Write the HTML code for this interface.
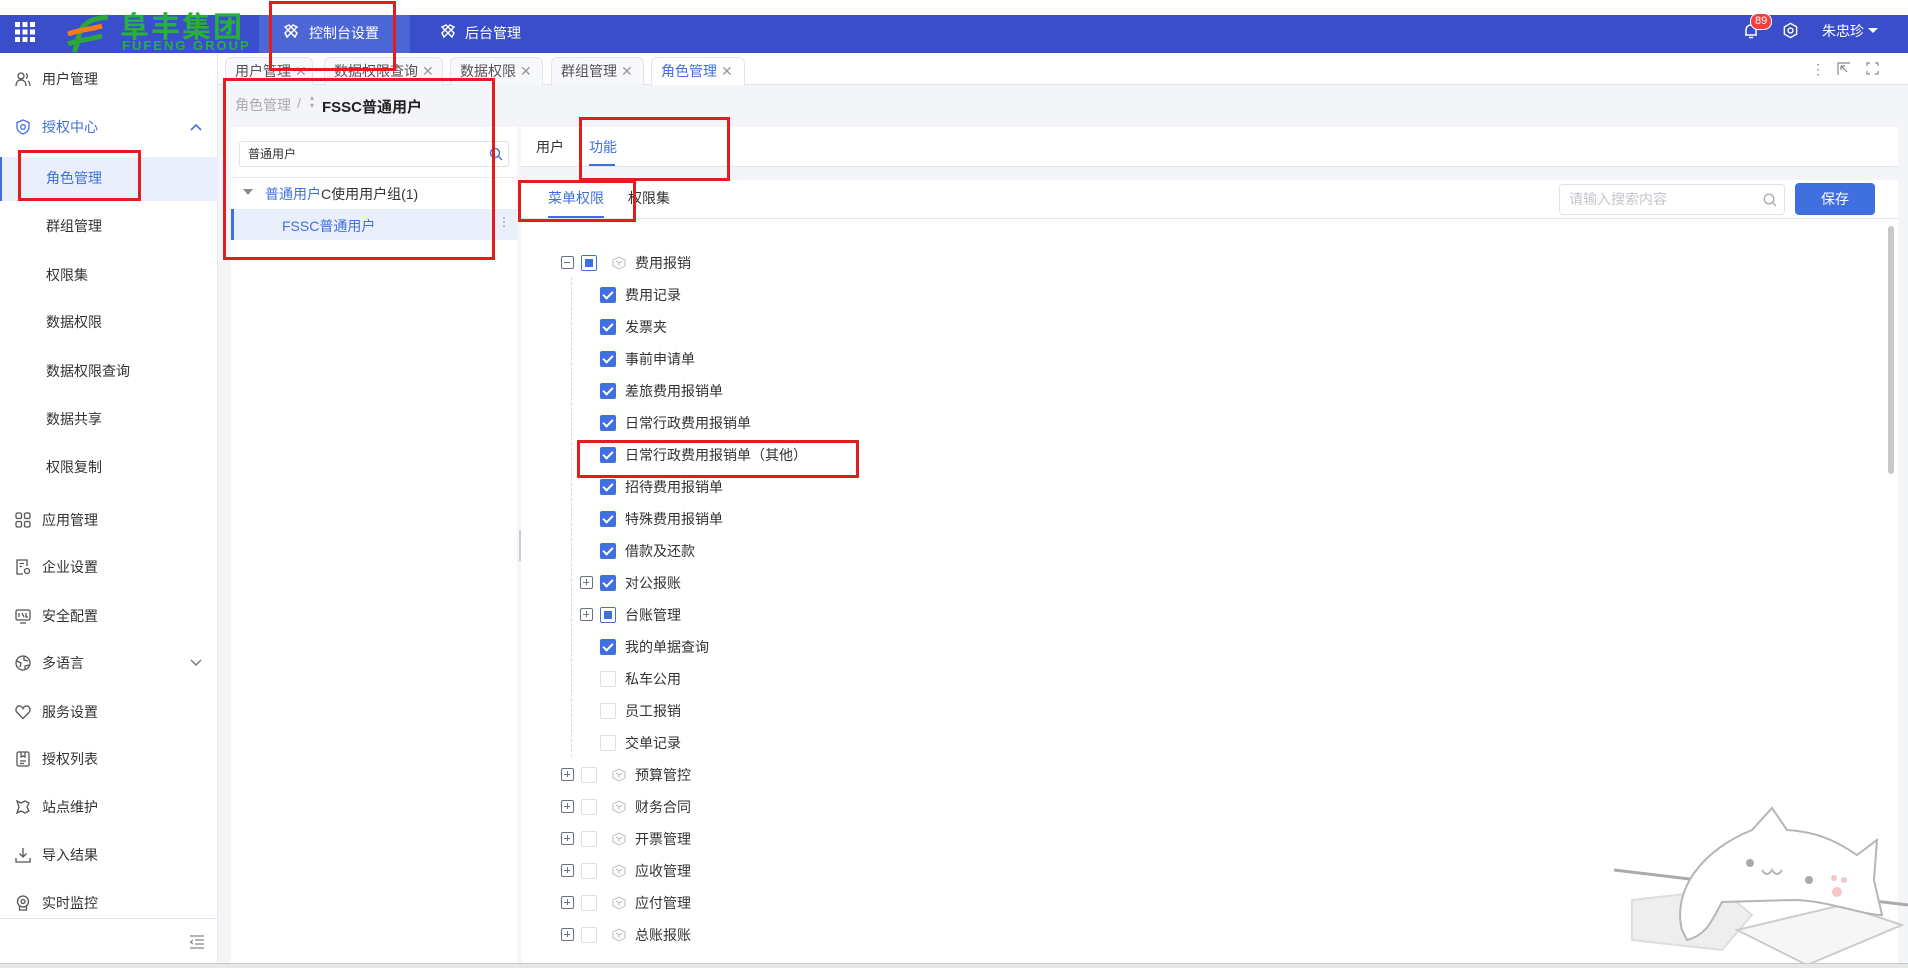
<!DOCTYPE html>
<html><head><meta charset="utf-8">
<style>
*{box-sizing:border-box;margin:0;padding:0}
body{width:1908px;height:968px;overflow:hidden;background:#fff;font-family:"Liberation Sans","Noto Sans CJK SC",sans-serif;font-size:14px;color:#333;position:relative}
.abs{position:absolute}
.top{left:0;top:15px;width:1908px;height:38px;background:#3a4ecb}
.side{left:0;top:53px;width:218px;height:910px;background:#fff;border-right:1px solid #e8e8ee}
.si{position:absolute;left:0;width:218px;height:24px;line-height:24px;font-size:14px;color:#333}
.si .ic{position:absolute;left:15px;top:4px;width:16px;height:16px}
.si span{position:absolute;left:42px}
.sub span{left:46px}
.content{left:218px;top:85px;width:1690px;height:878px;background:#f4f5f9}
.tab{position:absolute;top:57px;height:28px;border:1px solid #e3e5ec;border-bottom:none;border-radius:6px 6px 0 0;background:#f7f8fb;font-size:14px;line-height:27px;padding-left:9px;color:#555}
.tab b{font-weight:normal;color:#999;margin-left:4px}
.red{position:absolute;border:3px solid #e21d1d}
.row{position:absolute;height:20px;line-height:20px;font-size:14px;color:#333}
.cb{position:absolute;width:16px;height:16px;border-radius:2px}
.on{background:#4070e0}
.on:after{content:"";position:absolute;left:5px;top:2px;width:4px;height:8px;border:solid #fff;border-width:0 2px 2px 0;transform:rotate(45deg)}
.off{border:1px solid #dcdfe6;background:#fff}
.half{border:1px solid #4070e0;background:#fff}
.half:after{content:"";position:absolute;left:3px;top:3px;width:8px;height:8px;background:#4070e0}
.ex{position:absolute;width:13px;height:13px;border:1.5px solid #6b7285;border-radius:2px}
.ex:before{content:"";position:absolute;left:2px;top:4.5px;width:6px;height:1.5px;background:#6b7285}
.plus:after{content:"";position:absolute;left:4.5px;top:2px;width:1.5px;height:6px;background:#6b7285}
.cube{position:absolute;width:14px;height:14px}
</style></head><body>
<div class="abs top"></div>
<svg class="abs" style="left:15px;top:22px" width="20" height="20" viewBox="0 0 20 20" fill="#fff"><g><rect x="0" y="0" width="5" height="5"/><rect x="7.5" y="0" width="5" height="5"/><rect x="15" y="0" width="5" height="5"/><rect x="0" y="7.5" width="5" height="5"/><rect x="7.5" y="7.5" width="5" height="5"/><rect x="15" y="7.5" width="5" height="5"/><rect x="0" y="15" width="5" height="5"/><rect x="7.5" y="15" width="5" height="5"/><rect x="15" y="15" width="5" height="5"/></g></svg>
<svg class="abs" style="left:64px;top:14px" width="48" height="40" viewBox="0 0 48 40"><path d="M10 38 C16 28 12 18 22 10 C26 6 34 4 44 3" stroke="#2aa83a" stroke-width="5" fill="none"/><path d="M4 20 C14 16 24 16 38 12" stroke="#f07d1a" stroke-width="5" fill="none"/><path d="M4 30 C14 26 24 26 38 22" stroke="#2aa83a" stroke-width="5" fill="none"/></svg>
<div class="abs" style="left:120px;top:13px;color:#27b03a;font-size:29px;font-weight:bold;letter-spacing:2px;line-height:30px">阜丰集团</div>
<div class="abs" style="left:122px;top:40px;color:#27b03a;font-size:13px;font-weight:bold;letter-spacing:2px;line-height:12px">FUFENG GROUP</div>
<div class="abs" style="left:259px;top:15px;width:151px;height:38px;background:#4d66d6"></div>
<svg class="abs" style="left:283px;top:23px" width="16" height="16" viewBox="0 0 16 16" fill="none" stroke="#fff" stroke-width="1.5"><path d="M2 4 L6 2 L14 10 L12 14 Z"/><path d="M14 4 L10 2 L2 10 L4 14 Z"/></svg>
<div class="abs" style="left:309px;top:23px;color:#fff;font-size:14px">控制台设置</div>
<svg class="abs" style="left:440px;top:23px" width="16" height="16" viewBox="0 0 16 16" fill="none" stroke="#fff" stroke-width="1.5"><path d="M2 4 L6 2 L14 10 L12 14 Z"/><path d="M14 4 L10 2 L2 10 L4 14 Z"/></svg>
<div class="abs" style="left:465px;top:23px;color:#fff;font-size:14px">后台管理</div>
<svg class="abs" style="left:1742px;top:22px" width="18" height="18" viewBox="0 0 18 18" fill="none" stroke="#fff" stroke-width="1.5"><path d="M4 13 V8 a5 5 0 0 1 10 0 V13 H3 H15"/><path d="M7 15.5 H11"/></svg>
<div class="abs" style="left:1750px;top:13px;background:#f04040;color:#fff;font-size:11px;border-radius:8px;padding:0 4px;line-height:15px;border:1px solid #fff">89</div>
<svg class="abs" style="left:1782px;top:22px" width="17" height="17" viewBox="0 0 18 18" fill="none" stroke="#fff" stroke-width="1.5"><path d="M9 1.5 L15.5 5.2 V12.8 L9 16.5 L2.5 12.8 V5.2 Z"/><circle cx="9" cy="9" r="2.6"/></svg>
<div class="abs" style="left:1822px;top:21px;color:#fff;font-size:14px">朱忠珍</div>
<div class="abs" style="left:1868px;top:28px;border:5px solid transparent;border-top:5px solid #fff"></div>

<div class="abs side"></div>
<div class="abs" style="left:0;top:157px;width:218px;height:44px;background:#e9effb"></div>
<div class="abs" style="left:0;top:157px;width:2px;height:44px;background:#4070e0"></div>
<div class="si" style="top:67px"><svg class="ic" viewBox="0 0 16 16" fill="none" stroke="#555" stroke-width="1.3"><circle cx="6" cy="5" r="3"/><path d="M1 15 c0-4 2-6 5-6 s5 2 5 6"/><path d="M11 2.5 a3 3 0 0 1 0 5 M13 10 c1.5 1 2 3 2 5"/></svg><span>用户管理</span></div>
<div class="si" style="top:115px;color:#4070e0"><svg class="ic" viewBox="0 0 16 16" fill="none" stroke="#4070e0" stroke-width="1.3"><path d="M8 1 L14 3.5 V8 c0 3.5-3 6-6 7 c-3-1-6-3.5-6-7 V3.5 Z"/><circle cx="8" cy="8" r="2.3"/></svg><span>授权中心</span><svg style="position:absolute;left:190px;top:8px" width="12" height="8" viewBox="0 0 12 8" fill="none" stroke="#4070e0" stroke-width="1.6"><path d="M1 7 L6 2 L11 7"/></svg></div>
<div class="si sub" style="top:166px;color:#4070e0"><span>角色管理</span></div>
<div class="si sub" style="top:214px"><span>群组管理</span></div>
<div class="si sub" style="top:263px"><span>权限集</span></div>
<div class="si sub" style="top:310px"><span>数据权限</span></div>
<div class="si sub" style="top:359px"><span>数据权限查询</span></div>
<div class="si sub" style="top:407px"><span>数据共享</span></div>
<div class="si sub" style="top:455px"><span>权限复制</span></div>
<div class="si" style="top:508px"><svg class="ic" viewBox="0 0 16 16" fill="none" stroke="#555" stroke-width="1.3"><rect x="1" y="1" width="5.5" height="5.5" rx="1.5"/><rect x="9.5" y="1" width="5.5" height="5.5" rx="1.5"/><rect x="1" y="9.5" width="5.5" height="5.5" rx="1.5"/><rect x="9.5" y="9.5" width="5.5" height="5.5" rx="1.5"/></svg><span>应用管理</span></div>
<div class="si" style="top:555px"><svg class="ic" viewBox="0 0 16 16" fill="none" stroke="#555" stroke-width="1.3"><path d="M8 15 H2 V1 H12 V7"/><path d="M4.5 4.5 H9 M4.5 7.5 H7"/><circle cx="12" cy="12" r="2.5"/></svg><span>企业设置</span></div>
<div class="si" style="top:604px"><svg class="ic" viewBox="0 0 16 16" fill="none" stroke="#555" stroke-width="1.3"><rect x="1" y="2" width="14" height="10" rx="1.5"/><path d="M5 15 H11 M4 5 V9 M7 5 L9 9 M11 5 V9 L13 9"/></svg><span>安全配置</span></div>
<div class="si" style="top:651px"><svg class="ic" viewBox="0 0 16 16" fill="none" stroke="#555" stroke-width="1.3"><circle cx="8" cy="8" r="7"/><path d="M2 6 L6 8 L5 12 M9 1.5 L9 5 L13 6 M10 15 L10 11 L14 10"/></svg><span>多语言</span><svg style="position:absolute;left:190px;top:8px" width="12" height="8" viewBox="0 0 12 8" fill="none" stroke="#777" stroke-width="1.4"><path d="M1 1 L6 6 L11 1"/></svg></div>
<div class="si" style="top:700px"><svg class="ic" viewBox="0 0 16 16" fill="none" stroke="#555" stroke-width="1.3"><path d="M8 14.5 L2 8.5 C-0.5 5.5 2 1.5 5 2 C6.5 2.2 7.5 3.5 8 4.5 C8.5 3.5 9.5 2.2 11 2 C14 1.5 16.5 5.5 14 8.5 Z"/></svg><span>服务设置</span></div>
<div class="si" style="top:747px"><svg class="ic" viewBox="0 0 16 16" fill="none" stroke="#555" stroke-width="1.3"><rect x="2" y="1" width="12" height="14" rx="1.5"/><path d="M6 1 V6 L8 5 L10 6 V1 M5 10 H11 M5 12.5 H9"/></svg><span>授权列表</span></div>
<div class="si" style="top:795px"><svg class="ic" viewBox="0 0 16 16" fill="none" stroke="#555" stroke-width="1.3"><path d="M2 2 L6 4 L10 2 L14 4 L12 8 L14 12 L10 14 L6 12 L2 14 L4 8 Z"/></svg><span>站点维护</span></div>
<div class="si" style="top:843px"><svg class="ic" viewBox="0 0 16 16" fill="none" stroke="#555" stroke-width="1.3"><path d="M8 1 V10 M4.5 6.5 L8 10 L11.5 6.5 M1 11 V15 H15 V11"/></svg><span>导入结果</span></div>
<div class="si" style="top:891px"><svg class="ic" viewBox="0 0 16 16" fill="none" stroke="#555" stroke-width="1.3"><circle cx="8" cy="6.5" r="5.5"/><circle cx="8" cy="6.5" r="2"/><path d="M4.5 11.5 V15 H11.5 V11.5"/></svg><span>实时监控</span></div>
<div class="abs" style="left:0;top:918px;width:218px;height:1px;background:#e6e7ec"></div>
<svg class="abs" style="left:189px;top:935px" width="16" height="14" viewBox="0 0 16 14" fill="none" stroke="#888" stroke-width="1.2"><path d="M1 1 H15 M6 5 H15 M6 9 H15 M1 13 H15 M4 5 L1.5 7 L4 9"/></svg>

<div class="abs" style="left:218px;top:84px;width:1690px;height:1px;background:#e3e5ec"></div>
<div class="tab" style="left:225px;width:88px">用户管理<b>✕</b></div>
<div class="tab" style="left:324px;width:119px">数据权限查询<b>✕</b></div>
<div class="tab" style="left:450px;width:93px">数据权限<b>✕</b></div>
<div class="tab" style="left:551px;width:93px">群组管理<b>✕</b></div>
<div class="tab" style="left:651px;width:94px;background:#fff;color:#4070e0;height:29px">角色管理<b>✕</b></div>
<div class="abs" style="left:1811px;top:62px;color:#888;font-size:14px;line-height:14px">⋮</div>
<svg class="abs" style="left:1837px;top:62px" width="13" height="13" viewBox="0 0 13 13" fill="none" stroke="#888" stroke-width="1.2"><path d="M1 13 V1 H13 M4 4 L10 10 M4 4 H8 M4 4 V8"/></svg>
<svg class="abs" style="left:1866px;top:62px" width="13" height="13" viewBox="0 0 13 13" fill="none" stroke="#888" stroke-width="1.2"><path d="M1 4 V1 H4 M9 1 H12 V4 M12 9 V12 H9 M4 12 H1 V9"/></svg>

<div class="abs content"></div>
<div class="abs" style="left:235px;top:95px;color:#aaa;font-size:14px">角色管理</div>
<div class="abs" style="left:297px;top:95px;color:#aaa;font-size:14px">/</div>
<div class="abs" style="left:310px;top:94px;color:#aaa;font-size:8px;line-height:8px">▴<br>▾</div>
<div class="abs" style="left:322px;top:96px;color:#222;font-size:15px;font-weight:bold">FSSC普通用户</div>

<div class="abs" style="left:231px;top:127px;width:286px;height:836px;background:#fff"></div>
<div class="abs" style="left:239px;top:141px;width:270px;height:26px;border:1px solid #dfe2ea;border-radius:3px;font-size:12px;line-height:24px;padding-left:8px;color:#333">普通用户</div>
<svg class="abs" style="left:489px;top:147px" width="14" height="14" viewBox="0 0 14 14" fill="none" stroke="#4070e0" stroke-width="1.4"><circle cx="6" cy="6" r="4.5"/><path d="M9.5 9.5 L13 13"/></svg>
<div class="abs" style="left:231px;top:177px;width:286px;height:1px;background:#e8e9ee"></div>
<div class="abs" style="left:243px;top:189px;border:5px solid transparent;border-top:6px solid #888"></div>
<div class="abs" style="left:265px;top:184px;font-size:14px;color:#333"><span style="color:#4070e0">普通用户</span>C使用用户组(1)</div>
<div class="abs" style="left:231px;top:209px;width:286px;height:31px;background:#e9effb"></div>
<div class="abs" style="left:231px;top:209px;width:3px;height:31px;background:#4070e0"></div>
<div class="abs" style="left:282px;top:216px;font-size:14px;color:#4070e0">FSSC普通用户</div>
<div class="abs" style="left:498px;top:215px;font-size:12px;color:#888">⋮</div>
<div class="abs" style="left:519px;top:530px;width:12px;height:31px;background:#c9ccd6;border-radius:0 5px 5px 0"></div>
<div class="abs" style="left:522px;top:538px;color:#fff;font-size:11px">‹</div>

<div class="abs" style="left:521px;top:127px;width:1377px;height:40px;background:#fff;border-bottom:1px solid #e3e5ec"></div>
<div class="abs" style="left:536px;top:137px;font-size:14px;color:#333">用户</div>
<div class="abs" style="left:589px;top:137px;font-size:14px;color:#4070e0">功能</div>
<div class="abs" style="left:589px;top:164px;width:26px;height:2px;background:#4070e0"></div>
<div class="abs" style="left:521px;top:180px;width:1377px;height:783px;background:#fff"></div>
<div class="abs" style="left:548px;top:188px;font-size:14px;color:#4070e0">菜单权限</div>
<div class="abs" style="left:628px;top:188px;font-size:14px;color:#333">权限集</div>
<div class="abs" style="left:548px;top:216px;width:56px;height:2px;background:#4070e0"></div>
<div class="abs" style="left:521px;top:218px;width:1377px;height:1px;background:#e3e5ec"></div>
<div class="abs" style="left:1559px;top:184px;width:226px;height:31px;border:1px solid #dfe2ea;border-radius:4px;font-size:14px;line-height:29px;padding-left:9px;color:#c4c6cc">请输入搜索内容</div>
<svg class="abs" style="left:1763px;top:193px" width="14" height="14" viewBox="0 0 14 14" fill="none" stroke="#aaa" stroke-width="1.3"><circle cx="6" cy="6" r="4.8"/><path d="M9.5 9.5 L13 13"/></svg>
<div class="abs" style="left:1795px;top:183px;width:80px;height:32px;background:#4070e0;border-radius:4px;color:#fff;font-size:14px;text-align:center;line-height:32px">保存</div>
<div class="abs" style="left:1888px;top:226px;width:6px;height:248px;background:#c8c8c8;border-radius:3px"></div>

<div class="abs" style="left:571px;top:277px;width:0;height:480px;border-left:1px dashed #d6d8de"></div>
<div class="ex" style="left:561px;top:256px"></div>
<div class="cb half" style="left:581px;top:255px"></div>
<svg class="cube" style="left:612px;top:256px" viewBox="0 0 14 14" fill="none" stroke="#c4c6cc" stroke-width="1.2"><path d="M7 1 L13 4 V10 L7 13 L1 10 V4 Z M4 5 L7 7 L10 5 M7 7 V10"/></svg>
<div class="row" style="left:635px;top:253px">费用报销</div>

<div class="cb on" style="left:600px;top:287px"></div><div class="row" style="left:625px;top:285px">费用记录</div>
<div class="cb on" style="left:600px;top:319px"></div><div class="row" style="left:625px;top:317px">发票夹</div>
<div class="cb on" style="left:600px;top:351px"></div><div class="row" style="left:625px;top:349px">事前申请单</div>
<div class="cb on" style="left:600px;top:383px"></div><div class="row" style="left:625px;top:381px">差旅费用报销单</div>
<div class="cb on" style="left:600px;top:415px"></div><div class="row" style="left:625px;top:413px">日常行政费用报销单</div>
<div class="cb on" style="left:600px;top:447px"></div><div class="row" style="left:625px;top:445px">日常行政费用报销单（其他）</div>
<div class="cb on" style="left:600px;top:479px"></div><div class="row" style="left:625px;top:477px">招待费用报销单</div>
<div class="cb on" style="left:600px;top:511px"></div><div class="row" style="left:625px;top:509px">特殊费用报销单</div>
<div class="cb on" style="left:600px;top:543px"></div><div class="row" style="left:625px;top:541px">借款及还款</div>
<div class="ex plus" style="left:580px;top:576px"></div><div class="cb on" style="left:600px;top:575px"></div><div class="row" style="left:625px;top:573px">对公报账</div>
<div class="ex plus" style="left:580px;top:608px"></div><div class="cb half" style="left:600px;top:607px"></div><div class="row" style="left:625px;top:605px">台账管理</div>
<div class="cb on" style="left:600px;top:639px"></div><div class="row" style="left:625px;top:637px">我的单据查询</div>
<div class="cb off" style="left:600px;top:671px"></div><div class="row" style="left:625px;top:669px">私车公用</div>
<div class="cb off" style="left:600px;top:703px"></div><div class="row" style="left:625px;top:701px">员工报销</div>
<div class="cb off" style="left:600px;top:735px"></div><div class="row" style="left:625px;top:733px">交单记录</div>

<div class="ex plus" style="left:561px;top:768px"></div><div class="cb off" style="left:581px;top:767px"></div><svg class="cube" style="left:612px;top:768px" viewBox="0 0 14 14" fill="none" stroke="#c4c6cc" stroke-width="1.2"><path d="M7 1 L13 4 V10 L7 13 L1 10 V4 Z M4 5 L7 7 L10 5 M7 7 V10"/></svg><div class="row" style="left:635px;top:765px">预算管控</div>
<div class="ex plus" style="left:561px;top:800px"></div><div class="cb off" style="left:581px;top:799px"></div><svg class="cube" style="left:612px;top:800px" viewBox="0 0 14 14" fill="none" stroke="#c4c6cc" stroke-width="1.2"><path d="M7 1 L13 4 V10 L7 13 L1 10 V4 Z M4 5 L7 7 L10 5 M7 7 V10"/></svg><div class="row" style="left:635px;top:797px">财务合同</div>
<div class="ex plus" style="left:561px;top:832px"></div><div class="cb off" style="left:581px;top:831px"></div><svg class="cube" style="left:612px;top:832px" viewBox="0 0 14 14" fill="none" stroke="#c4c6cc" stroke-width="1.2"><path d="M7 1 L13 4 V10 L7 13 L1 10 V4 Z M4 5 L7 7 L10 5 M7 7 V10"/></svg><div class="row" style="left:635px;top:829px">开票管理</div>
<div class="ex plus" style="left:561px;top:864px"></div><div class="cb off" style="left:581px;top:863px"></div><svg class="cube" style="left:612px;top:864px" viewBox="0 0 14 14" fill="none" stroke="#c4c6cc" stroke-width="1.2"><path d="M7 1 L13 4 V10 L7 13 L1 10 V4 Z M4 5 L7 7 L10 5 M7 7 V10"/></svg><div class="row" style="left:635px;top:861px">应收管理</div>
<div class="ex plus" style="left:561px;top:896px"></div><div class="cb off" style="left:581px;top:895px"></div><svg class="cube" style="left:612px;top:896px" viewBox="0 0 14 14" fill="none" stroke="#c4c6cc" stroke-width="1.2"><path d="M7 1 L13 4 V10 L7 13 L1 10 V4 Z M4 5 L7 7 L10 5 M7 7 V10"/></svg><div class="row" style="left:635px;top:893px">应付管理</div>
<div class="ex plus" style="left:561px;top:928px"></div><div class="cb off" style="left:581px;top:927px"></div><svg class="cube" style="left:612px;top:928px" viewBox="0 0 14 14" fill="none" stroke="#c4c6cc" stroke-width="1.2"><path d="M7 1 L13 4 V10 L7 13 L1 10 V4 Z M4 5 L7 7 L10 5 M7 7 V10"/></svg><div class="row" style="left:635px;top:925px">总账报账</div>

<svg class="abs" style="left:1612px;top:790px" width="296" height="173" viewBox="0 0 296 173" fill="none" stroke="#b5b5b5" stroke-width="2">
<path d="M2 80 L296 115" stroke="#aaa" stroke-width="3"/>
<path d="M20 110 L110 100 L140 125 L110 160 L20 150 Z" fill="#eee" stroke="#ddd"/>
<path d="M125 140 L230 115 L290 135 L195 175 Z" fill="#f6f6f6" stroke="#ccc"/>
<path d="M70 140 C60 100 90 60 140 40 L160 18 L175 40 C210 42 230 55 245 65 L265 50 L262 90 L270 125 C250 125 215 110 180 110 L110 112 C100 130 95 145 75 150 Z" fill="#fff"/>
<circle cx="138" cy="73" r="4" fill="#aaa" stroke="none"/><circle cx="197" cy="90" r="4" fill="#aaa" stroke="none"/>
<path d="M150 80 q5 8 10 0 q5 8 10 0"/>
<circle cx="225" cy="102" r="5" fill="#f8c6c6" stroke="none"/><circle cx="222" cy="88" r="3" fill="#f8c6c6" stroke="none"/><circle cx="232" cy="90" r="3" fill="#f8c6c6" stroke="none"/>
</svg>
<div class="abs" style="left:0;top:963px;width:1908px;height:5px;background:#e6e8e6;border-top:1px solid #c8cac8"></div>

<div class="red" style="left:269px;top:1px;width:127px;height:70px"></div>
<div class="red" style="left:18px;top:150px;width:123px;height:51px"></div>
<div class="red" style="left:223px;top:78px;width:272px;height:182px"></div>
<div class="red" style="left:579px;top:117px;width:151px;height:64px"></div>
<div class="red" style="left:518px;top:180px;width:118px;height:42px"></div>
<div class="red" style="left:577px;top:440px;width:282px;height:38px"></div>
</body></html>
